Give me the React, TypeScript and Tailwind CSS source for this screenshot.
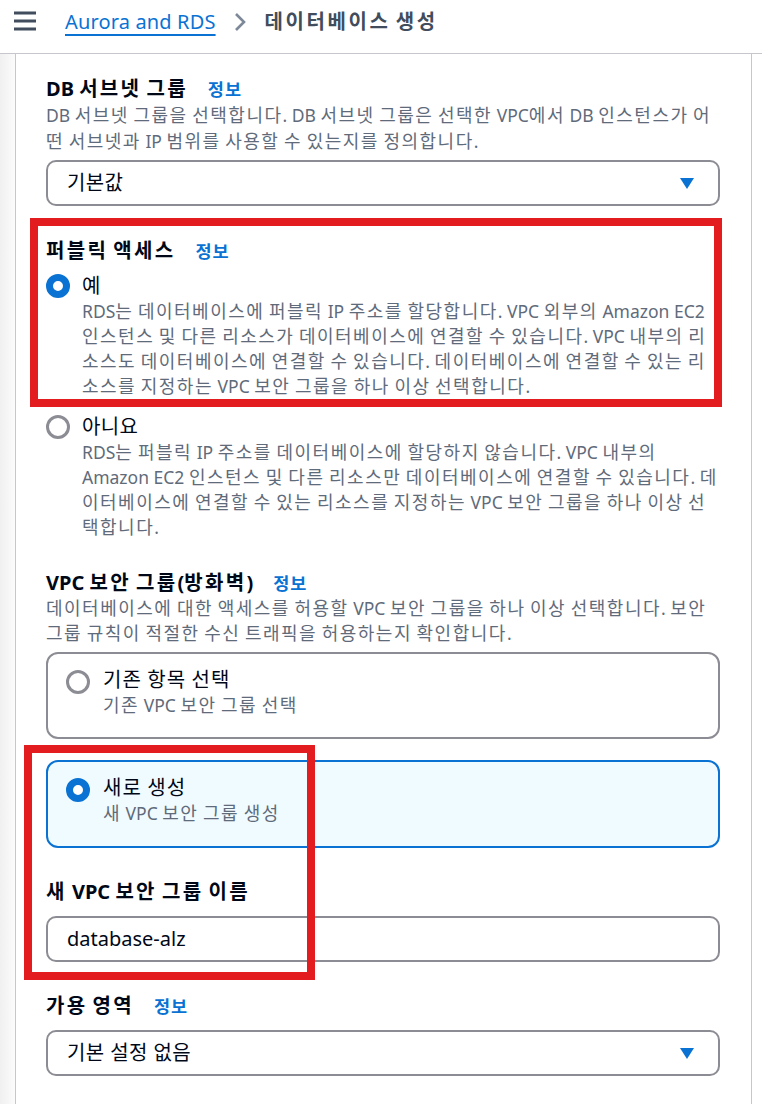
import React from "react";

const FONT = "font-['Noto_Sans','Noto_Sans_CJK_KR',sans-serif]";

function K({ text, h }: { text: string; h: string }) {
  const parts = text.split(/([\u3131-\uD79D]+)/);
  return (
    <>
      {parts.map((p, i) =>
        /[\u3131-\uD79D]/.test(p) ? (
          <span key={i} className={h}>
            {p}
          </span>
        ) : (
          <React.Fragment key={i}>{p}</React.Fragment>
        )
      )}
    </>
  );
}

const HDESC = "text-[18px] tracking-[1.5px]";

function Lines({ lines, className }: { lines: string[]; className: string }) {
  return (
    <div className={className}>
      {lines.map((l, i) => (
        <div key={i} className="whitespace-nowrap">
          <K text={l} h={HDESC} />
        </div>
      ))}
    </div>
  );
}

function Radio({ checked }: { checked: boolean }) {
  return checked ? (
    <div className="w-[24px] h-[24px] shrink-0 rounded-full border-[7px] border-[#0972d3] bg-white" />
  ) : (
    <div className="w-[24px] h-[24px] shrink-0 rounded-full border-[3px] border-[#8c8c94] bg-white" />
  );
}

function Heading({ text, info = true }: { text: string; info?: boolean }) {
  return (
    <div className="flex items-center h-[26px] leading-[26px]">
      <span className="text-[20px] font-bold text-[#000716] whitespace-nowrap">
        <K text={text} h="tracking-[2.3px]" />
      </span>
      {info && (
        <span className="ml-[20px] text-[17.5px] font-bold text-[#0972d3] tracking-[1px]">정보</span>
      )}
    </div>
  );
}

function Caret() {
  return (
    <svg width="14" height="11" viewBox="0 0 14 11" className="shrink-0">
      <path d="M0 0 H14 L7 11 Z" fill="#0972d3" />
    </svg>
  );
}

function Select({ value }: { value: string }) {
  return (
    <div className="h-[46px] rounded-[10px] border-2 border-[#8c8c94] flex items-center pl-[19px] pr-[24px] justify-between">
      <span className="text-[20px] text-[#000716] tracking-[0.4px]">{value}</span>
      <Caret />
    </div>
  );
}

const DESC = "text-[17.5px] leading-[25px] text-[#5f6b7a]";

export default function App() {
  return (
    <div className={`${FONT} bg-white w-[762px] min-h-[1104px]`}>
      {/* header */}
      <header className="h-[54px] border-b border-[#c6c6cd] flex items-start pt-[8px] pl-[14px]">
        <svg width="22" height="20" viewBox="0 0 22 20" className="mt-[3px]">
          <rect x="0" y="0.5" width="22" height="3" fill="#414d5c" />
          <rect x="0" y="8.5" width="22" height="3" fill="#414d5c" />
          <rect x="0" y="16.5" width="22" height="3" fill="#414d5c" />
        </svg>
        <a className="ml-[29px] text-[20px] leading-[27px] text-[#0972d3] underline decoration-2 underline-offset-[5px] tracking-[0.15px]">
          Aurora and RDS
        </a>
        <svg width="14" height="20" viewBox="0 0 14 20" className="ml-[17px] mt-[4px]">
          <polyline points="3,2 11,10 3,18" fill="none" stroke="#7d8998" strokeWidth="2.6" />
        </svg>
        <span className="ml-[18px] text-[20px] leading-[27px] font-bold text-[#414d5c] whitespace-nowrap">
          <K text="데이터베이스 생성" h="tracking-[2.6px]" />
        </span>
      </header>

      <div className="flex min-h-[1050px]">
        <div className="w-[15px] bg-gradient-to-r from-[#f0f0f0] to-[#fbfbfb]" />
        <main className="w-[737px] border-l border-r border-[#c6c6cd] pl-[30px] pr-[31px] pt-[22px] pb-[30px]">
          {/* DB subnet group */}
          <Heading text="DB 서브넷 그룹" />
          <Lines
            className={`${DESC} leading-[26px]`}
            lines={[
              "DB 서브넷 그룹을 선택합니다. DB 서브넷 그룹은 선택한 VPC에서 DB 인스턴스가 어",
              "떤 서브넷과 IP 범위를 사용할 수 있는지를 정의합니다.",
            ]}
          />
          <div className="mt-[6px]">
            <Select value="기본값" />
          </div>

          {/* public access */}
          <div className="relative mt-[32px]">
            <Heading text="퍼블릭 액세스" />
            <div className="flex mt-[9px]">
              <div className="w-[36px] pt-[1px]">
                <Radio checked />
              </div>
              <div>
                <div className="text-[20px] leading-[26px] text-[#000716]">예</div>
                <Lines
                  className={DESC}
                  lines={[
                    "RDS는 데이터베이스에 퍼블릭 IP 주소를 할당합니다. VPC 외부의 Amazon EC2",
                    "인스턴스 및 다른 리소스가 데이터베이스에 연결할 수 있습니다. VPC 내부의 리",
                    "소스도 데이터베이스에 연결할 수 있습니다. 데이터베이스에 연결할 수 있는 리",
                    "소스를 지정하는 VPC 보안 그룹을 하나 이상 선택합니다.",
                  ]}
                />
              </div>
            </div>
            <div className="absolute -top-[20px] -left-[16px] w-[692px] h-[189px] border-[8px] border-[#e31c1f] pointer-events-none" />
          </div>

          <div className="flex mt-[15px]">
            <div className="w-[36px] pt-[1px]">
              <Radio checked={false} />
            </div>
            <div>
              <div className="text-[20px] leading-[26px] text-[#000716] tracking-[0.3px]">아니요</div>
              <Lines
                className={DESC}
                lines={[
                  "RDS는 퍼블릭 IP 주소를 데이터베이스에 할당하지 않습니다. VPC 내부의",
                  "Amazon EC2 인스턴스 및 다른 리소스만 데이터베이스에 연결할 수 있습니다. 데",
                  "이터베이스에 연결할 수 있는 리소스를 지정하는 VPC 보안 그룹을 하나 이상 선",
                  "택합니다.",
                ]}
              />
            </div>
          </div>

          {/* VPC security group */}
          <div className="mt-[30px]">
            <Heading text="VPC 보안 그룹(방화벽)" />
            <Lines
              className={DESC}
              lines={[
                "데이터베이스에 대한 액세스를 허용할 VPC 보안 그룹을 하나 이상 선택합니다. 보안",
                "그룹 규칙이 적절한 수신 트래픽을 허용하는지 확인합니다.",
              ]}
            />
          </div>

          <div className="mt-[6px] h-[87px] rounded-[12px] border-2 border-[#8c8c94] flex items-start pl-[18px] pt-[13px]">
            <div className="mt-[3px]">
              <Radio checked={false} />
            </div>
            <div className="ml-[13px]">
              <div className="text-[20px] leading-[26px] text-[#000716] whitespace-nowrap">
                <K text="기존 항목 선택" h="tracking-[1.1px]" />
              </div>
              <div className="text-[17.5px] leading-[25px] text-[#5f6b7a] whitespace-nowrap">
                <K text="기존 VPC 보안 그룹 선택" h={HDESC} />
              </div>
            </div>
          </div>

          <div className="relative mt-[21px]">
            <div className="h-[88px] rounded-[12px] border-2 border-[#0972d3] bg-[#f0fbff] flex items-start pl-[18px] pt-[13px]">
              <div className="mt-[3px]">
                <Radio checked />
              </div>
              <div className="ml-[13px]">
                <div className="text-[20px] leading-[26px] text-[#000716] whitespace-nowrap">
                  <K text="새로 생성" h="tracking-[1.1px]" />
                </div>
                <div className="text-[17.5px] leading-[25px] text-[#5f6b7a] whitespace-nowrap">
                  <K text="새 VPC 보안 그룹 생성" h={HDESC} />
                </div>
              </div>
            </div>

            <div className="mt-[31px]">
              <Heading text="새 VPC 보안 그룹 이름" info={false} />
            </div>
            <div className="mt-[11px] h-[46px] rounded-[10px] border-2 border-[#8c8c94] flex items-center pl-[19px]">
              <span className="text-[20px] text-[#000716]">database-alz</span>
            </div>
            <div className="absolute -top-[15px] -left-[22px] w-[291px] h-[235px] border-[8px] border-[#e31c1f] pointer-events-none" />
          </div>

          {/* availability zone */}
          <div className="mt-[31px]">
            <Heading text="가용 영역" />
          </div>
          <div className="mt-[11px]">
            <Select value="기본 설정 없음" />
          </div>
        </main>
      </div>
    </div>
  );
}
